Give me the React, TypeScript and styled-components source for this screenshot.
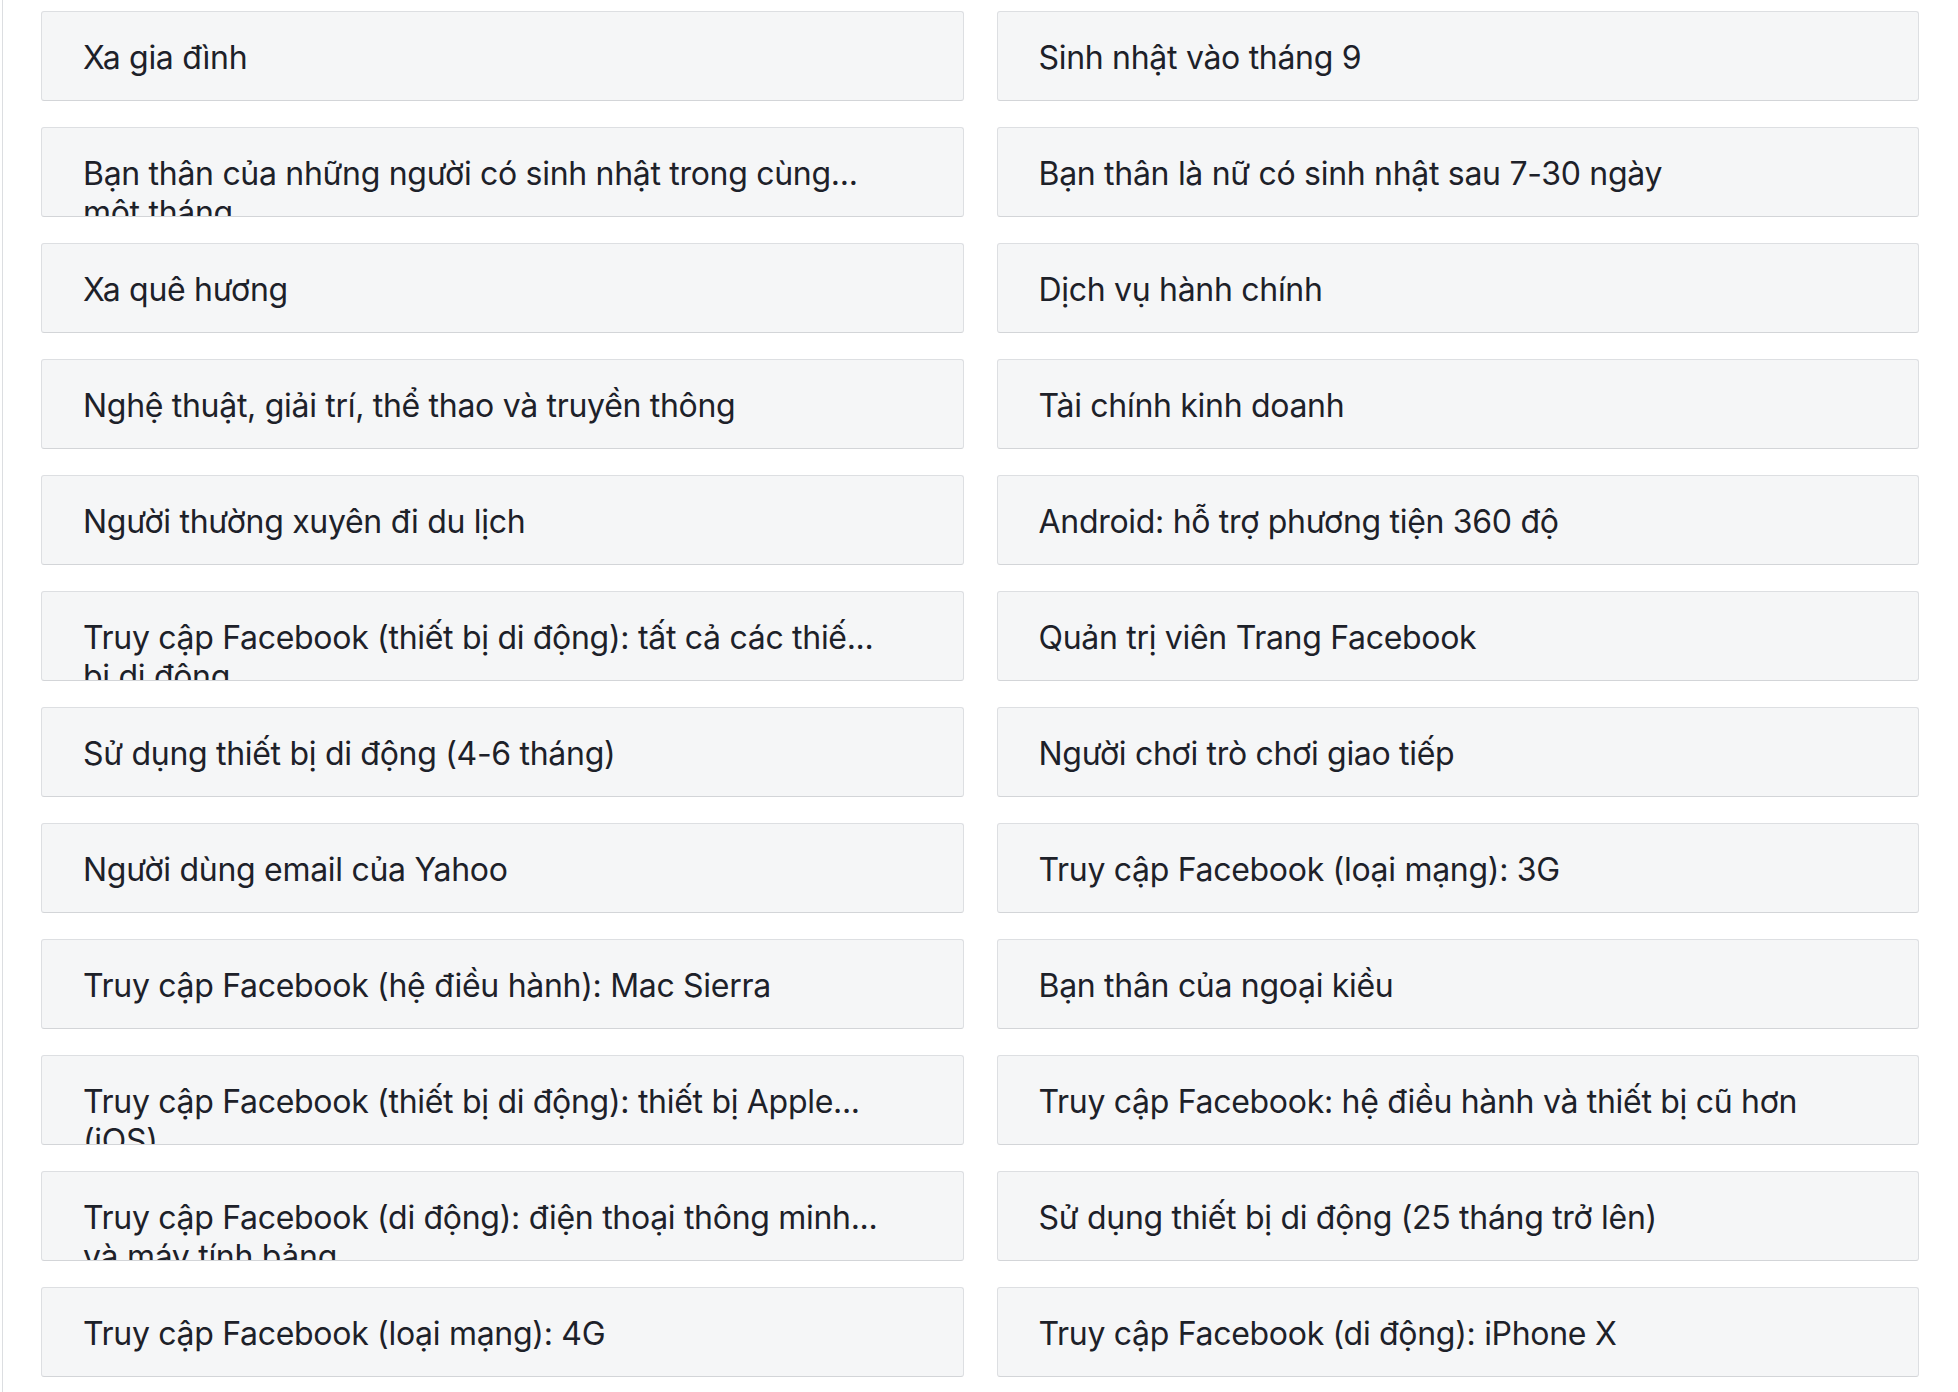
import React from 'react';
import styled, { createGlobalStyle } from 'styled-components';

const GlobalStyle = createGlobalStyle`
  html, body {
    margin: 0;
    padding: 0;
    background: #ffffff;
  }
  body {
    font-family: Inter, Roboto, "Noto Sans", sans-serif;
    -webkit-font-smoothing: antialiased;
  }
`;

const Page = styled.div`
  margin-left: 2px;
  border-left: 1px solid #dcdee1;
  min-height: 1392px;
  box-sizing: border-box;
  padding: 11px 39px 0 38px;
`;

const Grid = styled.div`
  display: grid;
  grid-template-columns: 1fr 1fr;
  column-gap: 33px;
  row-gap: 26px;
`;

const Card = styled.div`
  height: 90px;
  box-sizing: border-box;
  background: #f5f6f7;
  border: 1px solid #dddfe2;
  border-bottom-color: #d3d5d8;
  border-radius: 3px;
  padding: 26px 41px 0 41px;
  overflow: hidden;
  color: #1d2129;
  font-size: 32px;
  line-height: 39px;
  letter-spacing: -0.3px;
`;

const Line = styled.span`
  display: block;
  white-space: nowrap;
`;

// line breaks kept as they show up in the clamped tiles
const items: string[][] = [
  ['Xa gia đình'],
  ['Sinh nhật vào tháng 9'],
  ['Bạn thân của những người có sinh nhật trong cùng...', 'một tháng'],
  ['Bạn thân là nữ có sinh nhật sau 7-30 ngày'],
  ['Xa quê hương'],
  ['Dịch vụ hành chính'],
  ['Nghệ thuật, giải trí, thể thao và truyền thông'],
  ['Tài chính kinh doanh'],
  ['Người thường xuyên đi du lịch'],
  ['Android: hỗ trợ phương tiện 360 độ'],
  ['Truy cập Facebook (thiết bị di động): tất cả các thiế...', 'bị di động'],
  ['Quản trị viên Trang Facebook'],
  ['Sử dụng thiết bị di động (4-6 tháng)'],
  ['Người chơi trò chơi giao tiếp'],
  ['Người dùng email của Yahoo'],
  ['Truy cập Facebook (loại mạng): 3G'],
  ['Truy cập Facebook (hệ điều hành): Mac Sierra'],
  ['Bạn thân của ngoại kiều'],
  ['Truy cập Facebook (thiết bị di động): thiết bị Apple...', '(iOS)'],
  ['Truy cập Facebook: hệ điều hành và thiết bị cũ hơn'],
  ['Truy cập Facebook (di động): điện thoại thông minh...', 'và máy tính bảng'],
  ['Sử dụng thiết bị di động (25 tháng trở lên)'],
  ['Truy cập Facebook (loại mạng): 4G'],
  ['Truy cập Facebook (di động): iPhone X'],
];

export default function App() {
  return (
    <>
      <GlobalStyle />
      <Page>
        <Grid>
          {items.map((lines, i) => (
            <Card key={i}>
              {lines.map((l, j) => (
                <Line key={j}>{l}</Line>
              ))}
            </Card>
          ))}
        </Grid>
      </Page>
    </>
  );
}
